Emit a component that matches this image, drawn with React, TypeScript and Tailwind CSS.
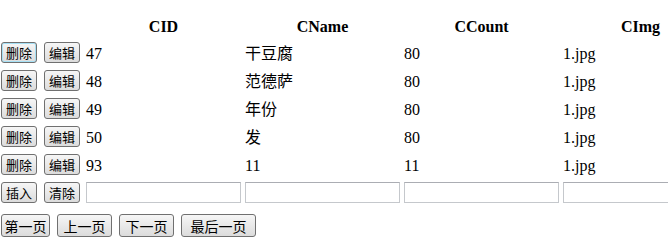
import React from "react";

const rows = [
  { id: "47", name: "干豆腐", count: "80", img: "1.jpg" },
  { id: "48", name: "范德萨", count: "80", img: "1.jpg" },
  { id: "49", name: "年份", count: "80", img: "1.jpg" },
  { id: "50", name: "发", count: "80", img: "1.jpg" },
  { id: "93", name: "11", count: "11", img: "1.jpg" },
];

const cjk = { fontFamily: '"Noto Sans CJK SC", sans-serif' };

const btn =
  "h-[21px] w-[36px] rounded-[3px] border border-[#707070] bg-gradient-to-b from-[#f6f6f6] to-[#dcdcdc] text-[13px] leading-none text-black";

const pageBtn =
  "h-[23px] rounded-[3px] border border-[#707070] bg-gradient-to-b from-[#f6f6f6] to-[#dcdcdc] text-[14px] leading-none text-black";

const input =
  "h-[21px] w-[155px] border border-[#c5c8cc] border-t-[#abadb3] bg-white";

const cell = "pl-[2px] pt-[4px] pb-0";

export default function App() {
  return (
    <div
      className="w-[668px] h-[245px] overflow-hidden bg-white pt-[12px] text-black"
      style={{ fontFamily: '"Liberation Serif", "Noto Sans CJK SC", serif' }}
    >
      <table className="table-fixed border-collapse w-[720px] text-[16px] leading-[18px]">
        <colgroup>
          <col className="w-[84px]" />
          <col className="w-[159px]" />
          <col className="w-[159px]" />
          <col className="w-[159px]" />
          <col className="w-[159px]" />
        </colgroup>
        <thead>
          <tr className="h-[26px]">
            <th></th>
            <th className="font-bold text-center pt-[4px]">CID</th>
            <th className="font-bold text-center pt-[4px]">CName</th>
            <th className="font-bold text-center pt-[4px]">CCount</th>
            <th className="font-bold text-center pt-[4px]">CImg</th>
          </tr>
        </thead>
        <tbody>
          {rows.map((r, i) => (
            <tr key={r.id} className="h-[28px]">
              <td className="pl-[1px] p-0">
                <div className="flex gap-[7px]">
                  <button
                    className={
                      btn +
                      (i === 0
                        ? " border-[#3c7fb1] shadow-[inset_0_0_0_1px_#a6e0f5]"
                        : "")
                    }
                    style={cjk}
                  >
                    删除
                  </button>
                  <button className={btn} style={cjk}>
                    编辑
                  </button>
                </div>
              </td>
              <td className={cell}>{r.id}</td>
              <td className={cell}>{r.name}</td>
              <td className={cell}>{r.count}</td>
              <td className={cell}>{r.img}</td>
            </tr>
          ))}
          <tr className="h-[28px]">
            <td className="pl-[1px] p-0">
              <div className="flex gap-[7px]">
                <button className={btn} style={cjk}>
                  插入
                </button>
                <button className={btn} style={cjk}>
                  清除
                </button>
              </div>
            </td>
            <td className="pl-[2px]">
              <input className={input} />
            </td>
            <td className="pl-[2px]">
              <input className={input} />
            </td>
            <td className="pl-[2px]">
              <input className={input} />
            </td>
            <td className="pl-[2px]">
              <input className={input} />
            </td>
          </tr>
        </tbody>
      </table>
      <div className="mt-[8px] flex gap-[7px] pl-[1px]" style={cjk}>
        <button className={pageBtn + " w-[49px]"}>第一页</button>
        <button className={pageBtn + " w-[55px]"}>上一页</button>
        <button className={pageBtn + " w-[55px]"}>下一页</button>
        <button className={pageBtn + " w-[75px]"}>最后一页</button>
      </div>
    </div>
  );
}
